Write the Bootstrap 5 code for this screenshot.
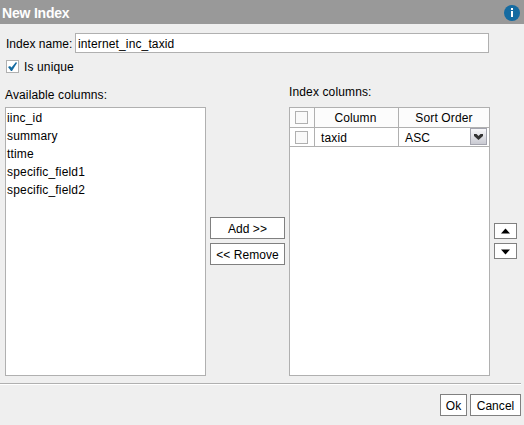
<!DOCTYPE html>
<html lang="en">
<head>
<meta charset="utf-8">
<title>New Index</title>
<link href="https://cdn.jsdelivr.net/npm/bootstrap@5.3.0/dist/css/bootstrap.min.css" rel="stylesheet">
<style>
body{background:#efefef;font:12px/18px "Liberation Sans",Arial,sans-serif;letter-spacing:.13px;color:#000;height:425px;overflow:hidden}
.title-bar{height:24px;background:#999;color:#fff;font-size:14px;letter-spacing:-.2px;padding:1px 4px 0 2px}
.name-row{height:20px;margin:9px 35px 0 6px}
.name-row label{width:69px;padding-top:2px;letter-spacing:.03px}
.name-input{border:1px solid #b0b0b0;border-radius:0;background:#fff;padding:1px 2px 0;font-size:12px;line-height:16px;letter-spacing:.13px;color:#000;height:20px;min-width:0}
.unique-row{margin:4px 0 0 6px;height:18px;gap:5px}
.unique-label{padding-top:1px}
.tick{width:13px;height:13px;border:1px solid #b0b0b0;background:#fff;flex:none}
.main-area{height:308px;padding:9px 0 0 5px}
.list-col{width:201px;flex:none}
.caption-text{height:23px}
.caption-low{padding-top:2px}
.caption-high{margin-top:-1px;height:24px}
.box{height:269px;border:1px solid #b0b0b0;background:#fff}
.box li{height:18px;padding-left:1px}
.box ul{padding-top:1px;letter-spacing:.18px}
.move-col{width:83px;flex:none;padding:133px 4px 0}
.order-col{width:27px;flex:none;padding:139px 0 0 4px}
.flat-btn{--bs-btn-border-radius:0;--bs-btn-color:#000;--bs-btn-bg:#fff;--bs-btn-border-color:#808080;--bs-btn-padding-x:0;--bs-btn-padding-y:0;font-size:12px;line-height:22px;letter-spacing:.05px;height:22px;display:block;white-space:nowrap}
.order-btn{width:23px;height:16px;line-height:0}
.ok-btn{width:27px}
.cancel-btn{width:51px}
.grid-table{table-layout:fixed;width:199px;border-collapse:separate;border-spacing:0;line-height:18px}
.grid-table th,.grid-table td{font-weight:400;padding:0;border-bottom:1px solid #b0b0b0;border-right:1px solid #b0b0b0}
.grid-table th{height:20px;background:#fcfcfc}
.grid-table th.col-head{padding-right:2px}
.grid-table td{height:19px}
.grid-table tr>:last-child{border-right:0}
.cell-text{padding-left:6px!important}
.cell-label{display:block;height:18px;line-height:20px}
.dim{background:#f9f9f9;margin:auto auto auto 5px}
.drop{width:17px;height:17px;background:linear-gradient(#f8f8fa,#c9cad2);border:1px solid #a3a4ae;line-height:0;margin-right:2px}
.footer-bar{border-top:1px solid #b0b0b0;box-shadow:inset 0 1px #fff;margin-right:3px;padding-top:10px;gap:3px;height:42px}
svg{display:block}
</style>
<script src="https://cdn.jsdelivr.net/npm/bootstrap@5.3.0/dist/js/bootstrap.bundle.min.js"></script>
</head>
<body>
<header class="title-bar d-flex align-items-center justify-content-between fw-bold"><span>New Index</span>
<svg width="16" height="16" viewBox="0 0 16 16"><circle cx="8" cy="8" r="8" fill="#156ba1"/><path d="M7 3h2v2H7zM7 6h2v6H7z" fill="#fff"/></svg></header>
<form>
<div class="name-row d-flex"><label for="n" class="text-nowrap">Index name:</label><input id="n" class="name-input flex-grow-1" value="internet_inc_taxid"></div>
<div class="unique-row d-flex align-items-center"><span class="tick"><svg width="11" height="11"><path d="M1 6l2-1 1.500 1.500L9 1l1 1-5 8H4z" fill="#156ba1"/></svg></span><span class="unique-label">Is unique</span></div>
<main class="main-area d-flex">
<section class="list-col"><div class="caption-text caption-low">Available columns:</div>
<div class="box"><ul class="list-unstyled mb-0"><li>iinc_id</li><li>summary</li><li>ttime</li><li>specific_field1</li><li>specific_field2</li></ul></div></section>
<div class="move-col d-flex flex-column gap-1"><button type="button" class="btn flat-btn w-100">Add &gt;&gt;</button><button type="button" class="btn flat-btn w-100">&lt;&lt; Remove</button></div>
<section class="list-col"><div class="caption-text caption-high">Index columns:</div>
<div class="box"><table class="grid-table"><colgroup><col style="width:25px"><col style="width:84px"><col></colgroup>
<thead><tr><th><div class="tick dim"></div></th><th class="text-center col-head">Column</th><th class="text-center">Sort Order</th></tr></thead>
<tbody><tr><td><div class="tick dim"></div></td><td class="cell-text"><span class="cell-label">taxid</span></td><td class="cell-text"><div class="d-flex justify-content-between"><span class="cell-label">ASC</span><span class="drop"><svg width="15" height="15"><path d="M3 5h2.500l2 2 2-2H12v2l-4.500 4L3 7z" fill="#333"/></svg></span></div></td></tr></tbody></table></div></section>
<div class="order-col d-flex flex-column gap-1"><button type="button" class="btn flat-btn order-btn" aria-label="Up"><svg width="21" height="14"><path d="M6 9.500l4.500-5 4.500 5z"/></svg></button><button type="button" class="btn flat-btn order-btn" aria-label="Down"><svg width="21" height="14"><path d="M6 5.500h9l-4.500 5z"/></svg></button></div>
</main>
<footer class="footer-bar d-flex justify-content-end"><button type="button" class="btn flat-btn ok-btn">Ok</button><button type="button" class="btn flat-btn cancel-btn">Cancel</button></footer>
</form>
</body>
</html>
